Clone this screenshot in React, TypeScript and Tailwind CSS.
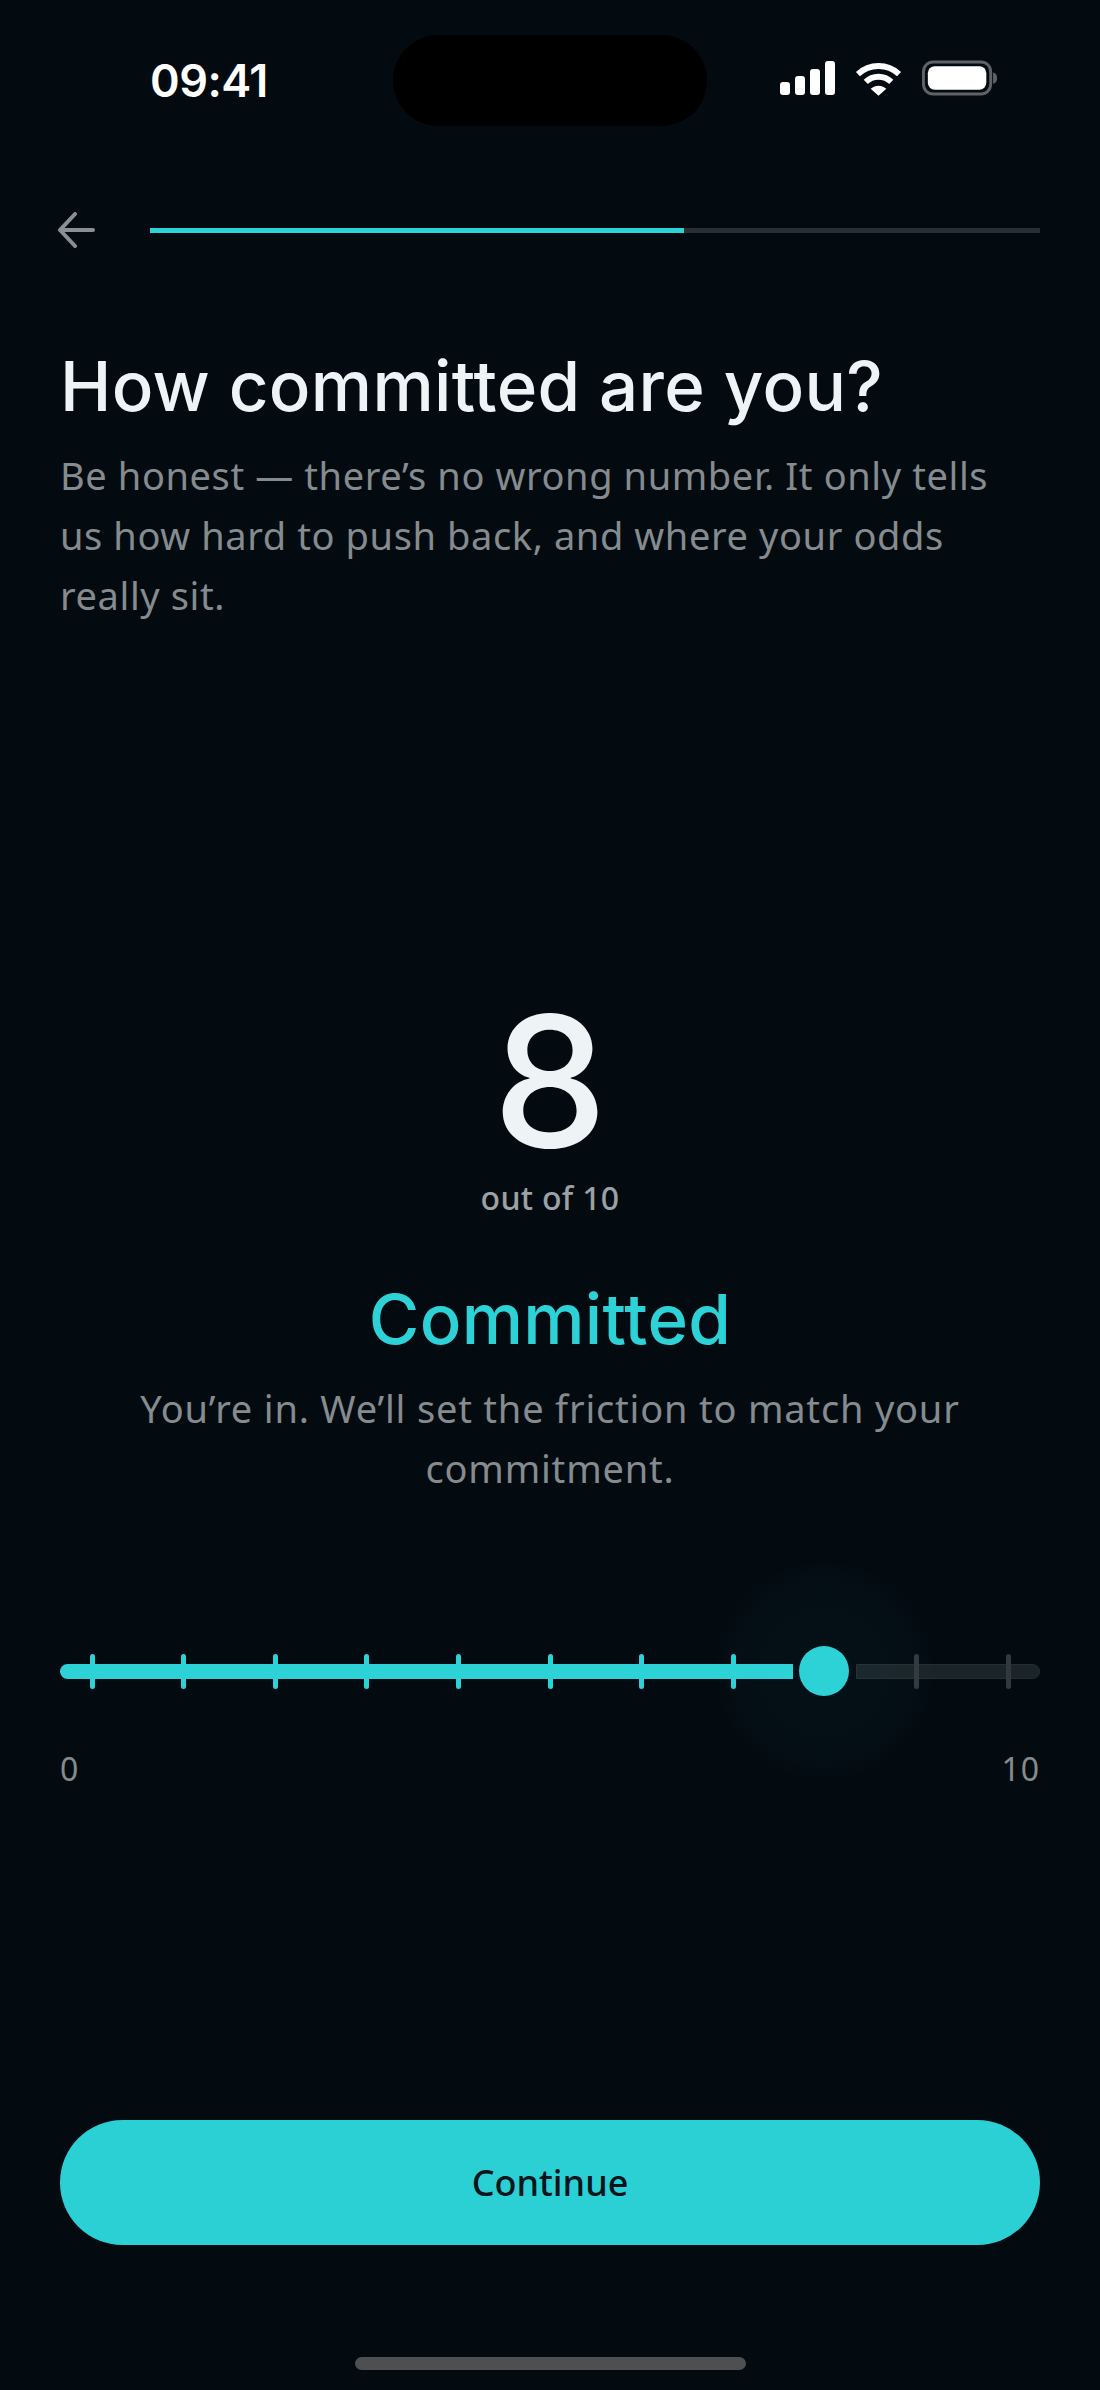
import React from 'react';

const ticks = [0, 1, 2, 3, 4, 5, 6, 7, 9, 10];

const StatusBar = () => (
  <div className="h-[126px] pt-[35px] pl-[150px] pr-[102px] flex items-start">
    <span className="w-[243px] mt-[19px] text-[45px] leading-[54px] font-semibold text-white font-['Inter'] tracking-[-0.5px]">09:41</span>
    <div className="w-[314px] h-[91px] rounded-[46px] bg-black" />
    <div className="ml-auto mt-[25px] flex items-center gap-[20px]">
      <svg width="55" height="35" viewBox="0 0 55 35" fill="#fff">
        <rect x="0" y="21" width="10" height="13" rx="3" />
        <rect x="15" y="15" width="10" height="19" rx="3" />
        <rect x="30" y="8" width="10" height="26" rx="3" />
        <rect x="45" y="0" width="10" height="34" rx="3" />
      </svg>
      <svg width="47" height="35" viewBox="0 0 48 35" fill="none" stroke="#fff" strokeWidth="6">
        <path d="M3 13 C15 2 33 2 45 13" />
        <path d="M11 21 C18 14 30 14 37 21" />
        <path d="M16 28 L24 35 L32 28 C27 24 21 24 16 28Z" fill="#fff" stroke="none" />
      </svg>
      <svg width="76" height="36" viewBox="0 0 78 36" fill="none">
        <rect x="1.5" y="1.5" width="69" height="33" rx="10" stroke="#5f6366" strokeWidth="3" />
        <rect x="6" y="6" width="60" height="24" rx="7" fill="#fff" />
        <path d="M73 12 C76 13 77 15 77 18 C77 21 76 23 73 24Z" fill="#5f6366" />
      </svg>
    </div>
  </div>
);

const Slider = () => (
  <div className="mt-[148px]">
    <div className="relative h-[50px] flex items-center">
      <div className="h-[15px] w-[733px] rounded-l-full bg-[#2dd2d7]" />
      <div className="ml-[63px] h-[15px] flex-1 rounded-r-full bg-[#1b2429] border border-[#252e33]" />
      {ticks.map((t) => (
        <div
          key={t}
          className={t < 8 ? 'absolute top-[8px] w-[5px] h-[35px] rounded-full bg-[#2dd2d7]' : 'absolute top-[8px] w-[5px] h-[35px] rounded-full bg-[#31393e]'}
          style={{ left: 29.5 + t * 91.6 }}
        />
      ))}
      <div className="absolute left-[654px] top-[-85px] w-[220px] h-[220px] rounded-full bg-[radial-gradient(circle,rgba(45,210,215,0.035)_0%,rgba(45,210,215,0.015)_55%,rgba(45,210,215,0)_72%)]" />
      <div className="absolute left-[739px] top-0 w-[50px] h-[50px] rounded-full bg-[#2dd2d7]" />
    </div>
    <div className="mt-[53px] flex justify-between text-[32px] leading-[40px] text-[#858b8e] font-['Noto_Sans'] tracking-[1px]">
      <span>0</span>
      <span>10</span>
    </div>
  </div>
);

const App: React.FC = () => {
  return (
    <div className="w-[1100px] h-[2390px] bg-[#030b11] flex flex-col overflow-hidden">
      <StatusBar />
      <div className="mt-[84px] pl-[57px] pr-[60px] flex items-center h-[40px]">
        <svg width="39" height="36" viewBox="0 0 39 36" fill="none" stroke="#8b8f92" strokeWidth="4" strokeLinecap="round" strokeLinejoin="round">
          <path d="M36 18 H3 M18 2 L3 18 L18 34" />
        </svg>
        <div className="ml-[54px] flex-1 h-[5px] bg-[#283033] flex">
          <div className="w-[534px] bg-[#2dd2d7]" />
        </div>
      </div>

      <div className="mt-[96px] px-[60px]">
        <h1 className="text-[69px] leading-[80px] font-medium text-[#eef3f6] font-['Inter'] tracking-[0.3px]">How committed are you?</h1>
        <p className="mt-[19px] text-[38px] leading-[60px] text-[#858b8e] font-['Noto_Sans'] tracking-[0.6px]">
          Be honest — there’s no wrong number. It only tells<br />
          us how hard to push back, and where your odds<br />
          really sit.
        </p>
      </div>

      <div className="mt-[366px] px-[60px]">
        <div className="text-center">
          <div className="text-[182px] leading-[180px] font-medium text-[#eef3f6] font-['Inter']">8</div>
          <div className="mt-[7px] text-[32px] leading-[40px] font-medium text-[#9ba1a4] font-['Noto_Sans'] tracking-[0.3px]">out of 10</div>
          <div className="mt-[61px] text-[69px] leading-[80px] font-medium text-[#2dd2d7] font-['Inter'] tracking-[0.3px]">Committed</div>
          <p className="mt-[19px] text-[38px] leading-[60px] text-[#858b8e] font-['Noto_Sans'] tracking-[0.8px]">
            You’re in. We’ll set the friction to match your<br />
            commitment.
          </p>
        </div>
        <Slider />
      </div>

      <div className="mt-auto px-[60px]">
        <button className="w-full h-[125px] rounded-full bg-[#2bd0d4] text-[36px] font-medium text-[#03141a] font-['Noto_Sans']">Continue</button>
      </div>
      <div className="mt-[112px] mb-[20px] mx-auto w-[391px] h-[13px] rounded-full bg-[#4d4f50]" />
    </div>
  );
};

export default App;
